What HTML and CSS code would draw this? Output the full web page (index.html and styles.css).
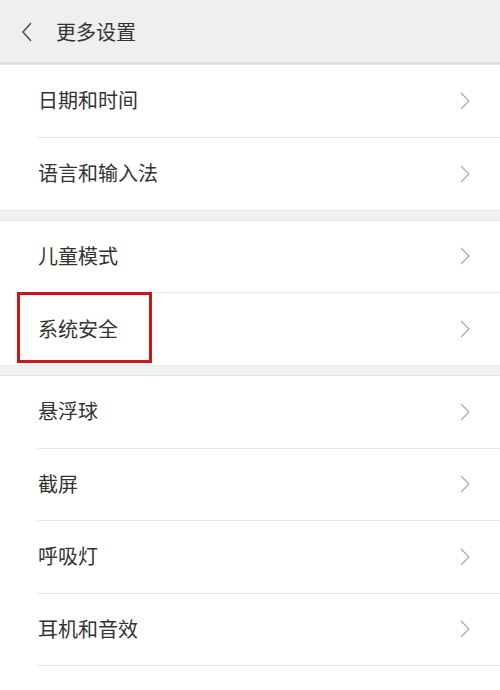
FILE: index.html
```html
<!DOCTYPE html>
<html lang="zh">

<head>
  <meta charset="UTF-8">
  <meta name="viewport" content="width=device-width, initial-scale=1.0">
  <title>更多设置</title>
  <link rel="stylesheet" href="styles.css">
</head>

<body>

  <div id="header">
    <svg class="back" width="12" height="20" viewBox="0 0 12 20">
      <polyline points="10,1 2,10 10,19" fill="none" stroke="#555" stroke-width="1.6" />
    </svg>
    <span id="title">更多设置</span>
  </div>

  <div class="section">
    <div class="row"><span class="label">日期和时间</span><svg class="arrow" viewBox="0 0 10 18"><polyline points="1,1 9,9 1,17" /></svg></div>
    <div class="row"><span class="label">语言和输入法</span><svg class="arrow" viewBox="0 0 10 18"><polyline points="1,1 9,9 1,17" /></svg></div>
  </div>

  <div class="section">
    <div class="row"><span class="label">儿童模式</span><svg class="arrow" viewBox="0 0 10 18"><polyline points="1,1 9,9 1,17" /></svg></div>
    <div class="row"><span class="label">系统安全</span><svg class="arrow" viewBox="0 0 10 18"><polyline points="1,1 9,9 1,17" /></svg><div class="mark"></div></div>
  </div>

  <div class="section">
    <div class="row"><span class="label">悬浮球</span><svg class="arrow" viewBox="0 0 10 18"><polyline points="1,1 9,9 1,17" /></svg></div>
    <div class="row"><span class="label">截屏</span><svg class="arrow" viewBox="0 0 10 18"><polyline points="1,1 9,9 1,17" /></svg></div>
    <div class="row"><span class="label">呼吸灯</span><svg class="arrow" viewBox="0 0 10 18"><polyline points="1,1 9,9 1,17" /></svg></div>
    <div class="row"><span class="label">耳机和音效</span><svg class="arrow" viewBox="0 0 10 18"><polyline points="1,1 9,9 1,17" /></svg></div>
    <div class="row"><span class="label">辅助功能</span><svg class="arrow" viewBox="0 0 10 18"><polyline points="1,1 9,9 1,17" /></svg></div>
  </div>

</body>

</html>
```

FILE: styles.css
```css
body {
  margin: 0;
  background-color: #f2f2f2;
  font-family: "Noto Sans CJK SC", "Noto Sans", sans-serif;
  color: #333;
  overflow: hidden;
}

#header {
  height: 62px;
  background-color: #efefef;
  border-bottom: 2px solid #dcdcdc;
  display: flex;
  align-items: center;
  padding-left: 21px;
}

.back {
  margin-right: 23px;
  margin-top: 1px;
}

#title {
  font-size: 20px;
  color: #333;
}

.section {
  background-color: #fff;
  border-top: 1px solid #e6e6e6;
  border-bottom: 1px solid #e6e6e6;
  margin-bottom: 9px;
  padding-left: 38px;
}

.section:first-of-type {
  border-top: none;
}

.row {
  position: relative;
  height: 71.5px;
  display: flex;
  align-items: center;
  border-bottom: 1px solid #e6e6e6;
  padding-right: 30px;
}

.row:last-child {
  border-bottom: none;
  height: 72px;
}

.label {
  flex: 1;
  font-size: 20px;
  color: #333;
  margin-top: -2px;
}

.arrow {
  width: 10px;
  height: 18px;
  fill: none;
  stroke: #aaa;
  stroke-width: 1.2;
}

/* red box around 系统安全 */
.mark {
  position: absolute;
  left: -21px;
  top: -1px;
  width: 135px;
  height: 71px;
  border: 3px solid #d0121b;
  box-sizing: border-box;
}
```
